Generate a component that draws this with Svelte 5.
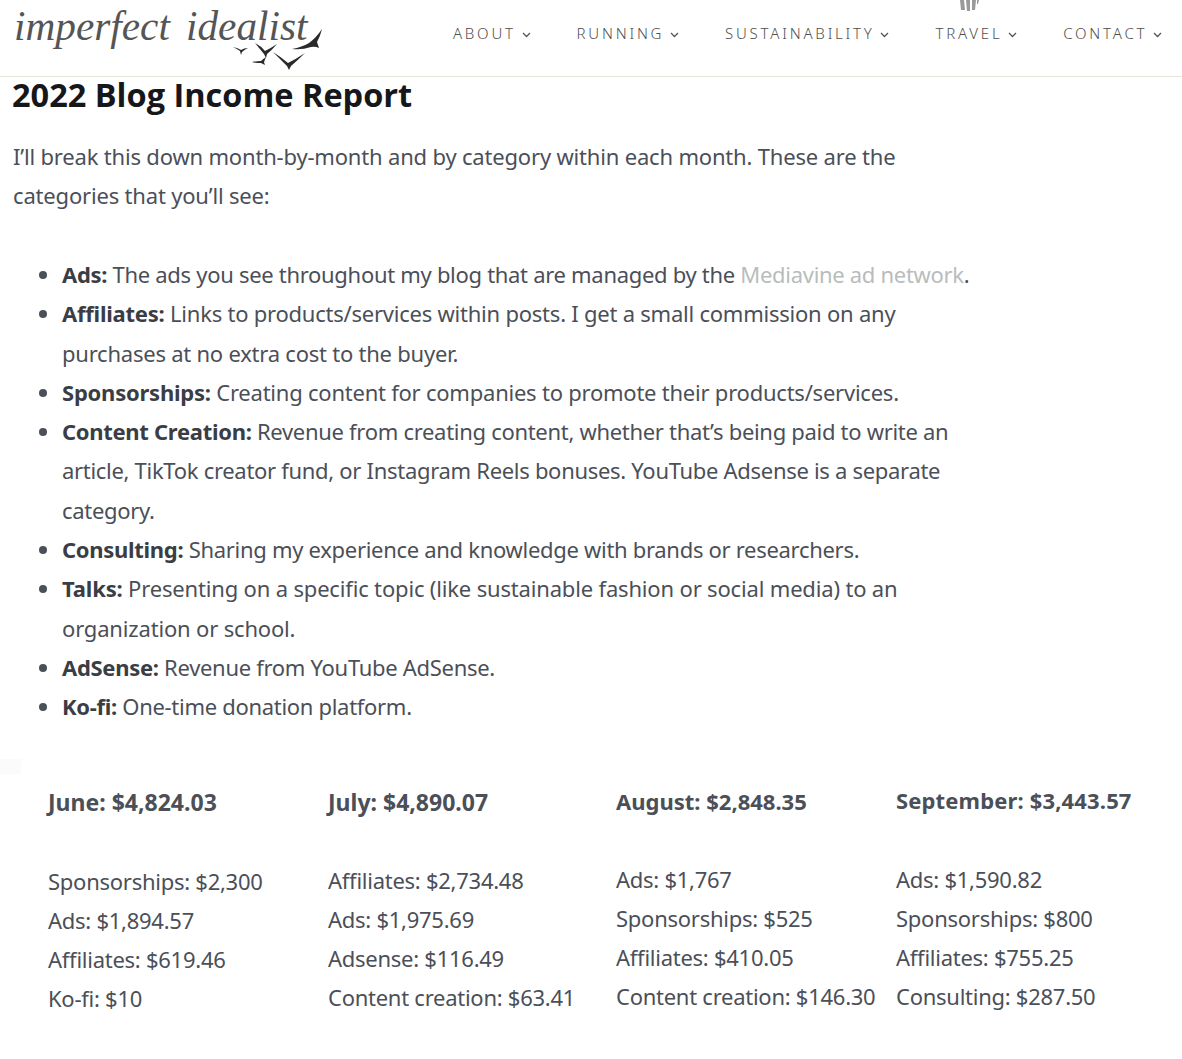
<script lang="ts">
  const nav = ['About', 'Running', 'Sustainability', 'Travel', 'Contact'];
  const months = [
    {
      cls: 'june',
      title: 'June: $4,824.03',
      rows: ['Sponsorships: $2,300', 'Ads: $1,894.57', 'Affiliates: $619.46', 'Ko-fi: $10'],
    },
    {
      cls: 'july',
      title: 'July: $4,890.07',
      rows: ['Affiliates: $2,734.48', 'Ads: $1,975.69', 'Adsense: $116.49', 'Content creation: $63.41'],
    },
    {
      cls: 'august',
      title: 'August: $2,848.35',
      rows: ['Ads: $1,767', 'Sponsorships: $525', 'Affiliates: $410.05', 'Content creation: $146.30'],
    },
    {
      cls: 'september',
      title: 'September: $3,443.57',
      rows: ['Ads: $1,590.82', 'Sponsorships: $800', 'Affiliates: $755.25', 'Consulting: $287.50'],
    },
  ];
</script>

<header class="site-header">
  <div class="logo">
    <span class="logo-text">imperfect idealist</span>
    <svg class="birds" width="95" height="46" viewBox="0 0 95 46" aria-hidden="true">
      <path d="M3 22Q8 23 11 25Q14 23 18 23Q14 25 12 27L11 30L10 26Q7 24 3 22z" />
      <path d="M25 18Q31 21 35 26Q41 23 47 19Q42 25 37 29L36 33L34 29Q29 23 25 18z" />
      <path d="M22 37Q27 36 31 36Q33 34 36 32L34 37L35 40L31 38Q26 38 22 37z" />
      <path d="M43 27Q51 32 58 38Q66 34 75 28Q68 35 61 41L59 45L57 41Q50 34 43 27z" />
      <path d="M62 24Q72 22 79 18Q86 13 92 4Q90 12 87 17L89 23Q85 21 81 22Q72 25 62 24z" />
    </svg>
  </div>
  <nav class="nav">
    {#each nav as item}
      <span class="nav-item">
        {item}
        <svg width="9" height="6" viewBox="0 0 9 6" aria-hidden="true"><path d="M1 1l3.500 3.500L8 1" /></svg>
      </span>
    {/each}
  </nav>
  <svg class="cutoff" width="22" height="12" viewBox="0 0 22 12" aria-hidden="true">
    <path d="M0 0h4l1 10H1zM6 0h4l0 11H7zM12 0h4l-1 10h-3zM17 0h2l-1 4h-1z" />
  </svg>
</header>

<main class="content">
  <h2>2022 Blog Income Report</h2>
  <p class="intro">I’ll break this down month-by-month and by category within each month. These are the<br />categories that you’ll see:</p>

  <ul class="cats">
    <li><strong>Ads:</strong> The ads you see throughout my blog that are managed by the <a href="#top">Mediavine ad network</a>.</li>
    <li class="loose"><strong>Affiliates:</strong> Links to products/services within posts. I get a small commission on any<br />purchases at no extra cost to the buyer.</li>
    <li class="loose"><strong>Sponsorships:</strong> Creating content for companies to promote their products/services.</li>
    <li><strong>Content Creation:</strong> Revenue from creating content, whether that’s being paid to write an<br />article, TikTok creator fund, or Instagram Reels bonuses. YouTube Adsense is a separate<br />category.</li>
    <li><strong>Consulting:</strong> Sharing my experience and knowledge with brands or researchers.</li>
    <li class="looser"><strong>Talks:</strong> Presenting on a specific topic (like sustainable fashion or social media) to an<br />organization or school.</li>
    <li><strong>AdSense:</strong> Revenue from YouTube AdSense.</li>
    <li><strong>Ko-fi:</strong> One-time donation platform.</li>
  </ul>

  <section class="months">
    <span class="patch"></span>
    {#each months as month}
      <div class="month {month.cls}">
        <h3>{month.title}</h3>
        {#each month.rows as row}
          <div class="row">{row}</div>
        {/each}
      </div>
    {/each}
  </section>
</main>

<style>
  :global(body) {
    background: #fff;
    font-family: "Noto Sans", "Open Sans", sans-serif;
    color: #4b4f58;
  }
  .site-header {
    height: 76px;
    display: flex;
    justify-content: space-between;
    border-bottom: 1px solid #e4e4da;
    position: relative;
  }
  .logo {
    position: relative;
    width: 340px;
    padding-left: 14px;
  }
  .logo-text {
    display: block;
    font-family: "Liberation Serif", serif;
    font-style: italic;
    font-size: 43px;
    line-height: 52px;
    color: #555;
    transform: scaleX(0.96);
    transform-origin: left;
    white-space: nowrap;
    word-spacing: 6px;
  }
  .birds {
    position: absolute;
    left: 230px;
    top: 25px;
    fill: #2a2a2a;
  }
  .cutoff {
    position: absolute;
    left: 960px;
    top: 0;
    fill: #9a9a9a;
  }
  .nav {
    display: flex;
    gap: 46px;
    padding: 23px 20px 0 0;
  }
  .nav-item {
    font-size: 15px;
    font-weight: 300;
    line-height: 20px;
    letter-spacing: 2.800px;
    text-transform: uppercase;
    color: #4f4f4f;
    white-space: nowrap;
  }
  .nav-item svg {
    margin-left: -1px;
    vertical-align: 1px;
  }
  .nav-item path {
    fill: none;
    stroke: #555;
    stroke-width: 1.300;
  }
  .content {
    padding-left: 12px;
  }
  h2 {
    margin: 0;
    font-family: "Open Sans", sans-serif;
    font-size: 32.500px;
    line-height: 35px;
    font-weight: 700;
    color: #15171a;
  }
  .intro {
    margin: 25px 0 0 1px;
    font-size: 22px;
    line-height: 39.300px;
    letter-spacing: -0.180px;
  }
  .cats {
    margin: 39.400px 0 0;
    padding: 0 0 0 50px;
    font-size: 22px;
    line-height: 39.300px;
    letter-spacing: -0.300px;
  }
  .cats .loose {
    letter-spacing: -0.230px;
  }
  .cats .looser {
    letter-spacing: -0.170px;
  }
  .cats strong {
    color: #3a3d44;
  }
  .cats a {
    color: #b9bcbc;
    text-decoration: none;
  }
  .months {
    display: grid;
    grid-template-columns: 280px 288px 280px 1fr;
    margin: 54.600px 0 0 36px;
    font-size: 22px;
    line-height: 39px;
    letter-spacing: -0.260px;
    position: relative;
  }
  .patch {
    position: absolute;
    left: -48px;
    top: -22px;
    width: 21px;
    height: 15px;
    background: #fbfbfb;
  }
  .june {
    padding-top: 2px;
  }
  .july {
    padding-top: 2px;
  }
  .august {
    padding-top: 1px;
  }
  h3 {
    margin: 0 0 39px;
    font-size: 22px;
    line-height: 39px;
    font-weight: 700;
    letter-spacing: 0;
  }
  .june h3 {
    margin-bottom: 40px;
    font-size: 23px;
  }
  .july h3 {
    font-size: 23px;
  }
  .september h3 {
    margin-bottom: 40px;
    letter-spacing: 0.150px;
  }
</style>
